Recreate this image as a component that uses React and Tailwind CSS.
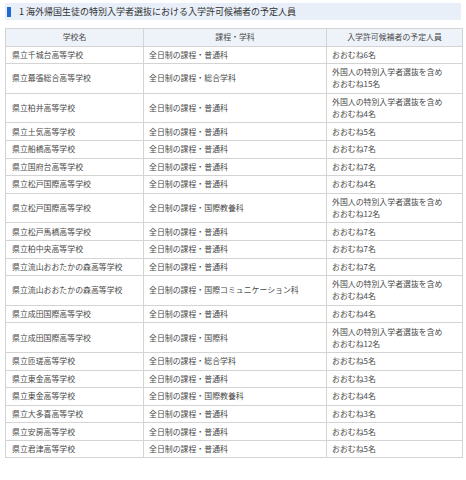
import React from 'react';

const SEL = '外国人の特別入学者選抜を含め';

const rows = [
  ['県立千城台高等学校', '全日制の課程・普通科', ['おおむね6名']],
  ['県立幕張総合高等学校', '全日制の課程・総合学科', [SEL, 'おおむね15名']],
  ['県立柏井高等学校', '全日制の課程・普通科', [SEL, 'おおむね4名']],
  ['県立土気高等学校', '全日制の課程・普通科', ['おおむね5名']],
  ['県立船橋高等学校', '全日制の課程・普通科', ['おおむね7名']],
  ['県立国府台高等学校', '全日制の課程・普通科', ['おおむね7名']],
  ['県立松戸国際高等学校', '全日制の課程・普通科', ['おおむね4名']],
  ['県立松戸国際高等学校', '全日制の課程・国際教養科', [SEL, 'おおむね12名']],
  ['県立松戸馬橋高等学校', '全日制の課程・普通科', ['おおむね7名']],
  ['県立柏中央高等学校', '全日制の課程・普通科', ['おおむね7名']],
  ['県立流山おおたかの森高等学校', '全日制の課程・普通科', ['おおむね7名']],
  ['県立流山おおたかの森高等学校', '全日制の課程・国際コミュニケーション科', [SEL, 'おおむね4名']],
  ['県立成田国際高等学校', '全日制の課程・普通科', ['おおむね4名']],
  ['県立成田国際高等学校', '全日制の課程・国際科', [SEL, 'おおむね12名']],
  ['県立匝瑳高等学校', '全日制の課程・総合学科', ['おおむね5名']],
  ['県立東金高等学校', '全日制の課程・普通科', ['おおむね3名']],
  ['県立東金高等学校', '全日制の課程・国際教養科', ['おおむね4名']],
  ['県立大多喜高等学校', '全日制の課程・普通科', ['おおむね3名']],
  ['県立安房高等学校', '全日制の課程・普通科', ['おおむね5名']],
  ['県立君津高等学校', '全日制の課程・普通科', ['おおむね5名']],
];

const font = { fontFamily: '"Noto Sans CJK JP", "Noto Sans", sans-serif' };

const App = () => {
  return (
    <div className="w-[466px] h-[480px] bg-white px-[5px] pt-[3px] text-[#4a4a4a]" style={font}>
      <div className="flex items-center h-[17px] bg-[#e8eff9] pl-[2px]">
        <span className="w-[4px] h-[10px] bg-[#1e6ad2] mr-[8px]"></span>
        <h2 className="text-[9px] leading-[12px] text-[#333]">
          1&nbsp;海外帰国生徒の特別入学者選抜における入学許可候補者の予定人員
        </h2>
      </div>
      <table className="mt-[8px] w-[457px] border-collapse table-fixed text-[7.9px] leading-[12px]">
        <colgroup>
          <col className="w-[138px]" />
          <col className="w-[183px]" />
          <col className="w-[136px]" />
        </colgroup>
        <thead>
          <tr className="bg-[#eef2f9]">
            <th className="border border-[#d4d4d4] font-normal py-[2.3px] text-center">学校名</th>
            <th className="border border-[#d4d4d4] font-normal py-[2.3px] text-center">課程・学科</th>
            <th className="border border-[#d4d4d4] font-normal py-[2.3px] text-center">入学許可候補者の予定人員</th>
          </tr>
        </thead>
        <tbody>
          {rows.map(([school, course, num], i) => (
            <tr key={i}>
              <td className="border border-[#d4d4d4] pl-[6px] pr-[4px] py-[2.3px] align-middle whitespace-nowrap">{school}</td>
              <td className="border border-[#d4d4d4] pl-[5px] pr-[4px] py-[2.3px] align-middle whitespace-nowrap">{course}</td>
              <td className="border border-[#d4d4d4] pl-[5px] pr-[4px] py-[2.3px] align-middle whitespace-nowrap">
                {num.map((t, j) => (
                  <div key={j}>{t}</div>
                ))}
              </td>
            </tr>
          ))}
        </tbody>
      </table>
    </div>
  );
};

export default App;
